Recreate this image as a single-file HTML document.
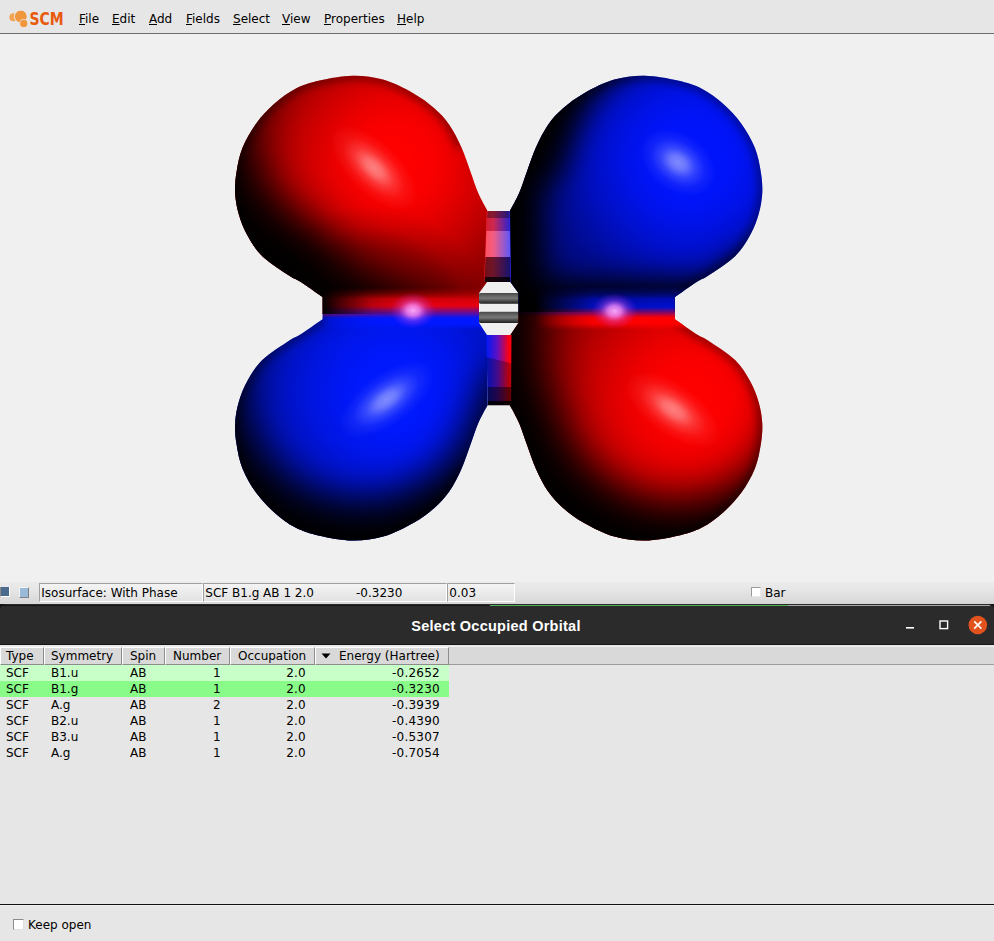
<!DOCTYPE html>
<html>
<head>
<meta charset="utf-8">
<title>Select Occupied Orbital</title>
<style>
html,body{margin:0;padding:0;}
body{width:994px;height:941px;position:relative;overflow:hidden;background:#e6e6e6;font-family:"DejaVu Sans","Liberation Sans",sans-serif;font-size:12px;color:#000;}
.abs{position:absolute;}
#menubar{left:0;top:0;width:994px;height:33px;background:#e6e6e6;border-bottom:1px solid #6f6f6f;box-sizing:content-box;}
#menubar span.mi{position:absolute;top:11px;font-size:12px;line-height:16px;white-space:nowrap;}
#menubar u{text-decoration:underline;text-underline-offset:1px;}
#logo{position:absolute;left:0;top:0;}
#view{left:0;top:34px;width:994px;height:548px;background:#f0f0f0;}
#status{left:0;top:582px;width:994px;height:22px;background:linear-gradient(#ebebeb,#e6e6e6 35%,#d6d6d6);}
.sfield{position:absolute;top:1px;height:19px;padding-top:1px;border:1px solid #a0a0a0;border-right-color:#fff;border-bottom-color:#fff;background:linear-gradient(#f4f4f4,#e2e2e2);font-size:12px;line-height:17px;white-space:nowrap;box-sizing:border-box;}
#titlebar{left:0;top:604px;width:994px;height:40px;border-bottom:1px solid #161616;background:#2b2b2b;border-radius:6px 6px 0 0;}
#title{position:absolute;left:0;width:992px;top:13px;text-align:center;color:#fff;font-weight:bold;font-size:14.5px;letter-spacing:0.25px;line-height:18px;font-family:"Liberation Sans","DejaVu Sans",sans-serif;}
#panel{left:0;top:645px;width:994px;height:296px;background:#e6e6e6;}
.hcell{position:absolute;top:2px;height:18px;box-sizing:border-box;border:1px solid #8c8c8c;border-top-color:#fff;border-left-color:#fff;background:#d9d9d9;font-size:12px;line-height:16px;white-space:nowrap;}
.row{position:absolute;left:0;width:449px;height:16px;font-size:12px;line-height:16px;}
.row span{position:absolute;top:0;white-space:nowrap;}
.r{text-align:right;letter-spacing:0.25px;}
</style>
</head>
<body>
<div id="menubar" class="abs">
<svg id="logo" width="70" height="34" viewBox="0 0 70 34">
<circle cx="13.4" cy="17.3" r="4" fill="#f3a452"/>
<circle cx="20.8" cy="16.5" r="6.4" fill="#f0963c" stroke="#ececec" stroke-width="1"/>
<circle cx="23.7" cy="23.5" r="4.1" fill="#f0963c" stroke="#ececec" stroke-width="0.8"/>
<text x="29.4" y="25.4" font-family="'DejaVu Sans','Liberation Sans',sans-serif" font-weight="bold" font-size="17.6" fill="#e8590c" textLength="34.2" lengthAdjust="spacingAndGlyphs">SCM</text>
</svg>
<span class="mi" style="left:79px"><u>F</u>ile</span>
<span class="mi" style="left:112px"><u>E</u>dit</span>
<span class="mi" style="left:149px"><u>A</u>dd</span>
<span class="mi" style="left:186px"><u>F</u>ields</span>
<span class="mi" style="left:233px"><u>S</u>elect</span>
<span class="mi" style="left:282px"><u>V</u>iew</span>
<span class="mi" style="left:324px"><u>P</u>roperties</span>
<span class="mi" style="left:397px"><u>H</u>elp</span>
</div>

<div id="view" class="abs">
<svg class="abs" style="left:0;top:0" width="994" height="548" viewBox="0 34 994 548">
<defs>
<path id="pl" d="M322.6 297.0C318.8 294.4 305.5 285.0 300.0 281.5C294.5 278.0 295.7 280.0 289.4 275.8C283.1 271.6 269.3 263.0 262.3 256.2C255.3 249.4 251.1 242.0 247.2 235.0C243.3 228.0 240.7 221.0 238.7 214.0C236.7 207.0 235.4 199.9 235.1 192.8C234.8 185.8 235.3 179.2 236.6 171.7C237.8 164.1 239.3 155.6 242.6 147.5C245.9 139.4 250.9 130.7 256.2 123.4C261.5 116.1 267.8 109.6 274.3 103.8C280.9 98.0 287.9 92.6 295.5 88.7C303.1 84.8 310.1 82.7 319.6 80.5C329.2 78.3 342.2 75.9 352.8 75.7C363.4 75.5 372.9 76.7 383.0 79.6C393.1 82.5 404.6 88.4 413.2 93.2C421.8 98.0 428.3 103.0 434.3 108.3C440.3 113.6 444.9 118.4 449.4 124.9C453.9 131.4 458.0 139.7 461.5 147.5C465.0 155.3 467.7 164.1 470.5 171.7C473.3 179.2 475.3 186.2 478.1 192.8C480.9 199.4 485.9 208.0 487.5 211.0L487.0 282.0L479.0 293.0L479.0 323.0L487.0 335.0L487.5 405.2C485.9 408.2 480.9 416.9 478.1 423.4C475.3 430.0 473.3 437.0 470.5 444.5C467.7 452.1 465.0 460.9 461.5 468.7C458.0 476.5 453.9 484.8 449.4 491.3C444.9 497.8 440.3 502.6 434.3 507.9C428.3 513.2 421.8 518.2 413.2 523.0C404.6 527.8 393.1 533.7 383.0 536.6C372.9 539.5 363.4 540.6 352.8 540.5C342.2 540.4 329.2 537.9 319.6 535.7C310.1 533.5 303.1 531.4 295.5 527.5C287.9 523.6 280.9 518.2 274.3 512.4C267.8 506.6 261.5 500.1 256.2 492.8C250.9 485.5 245.9 476.8 242.6 468.7C239.3 460.7 237.8 452.1 236.6 444.5C235.3 437.0 234.8 430.5 235.1 423.4C235.4 416.4 236.7 409.2 238.7 402.2C240.7 395.2 243.3 388.2 247.2 381.2C251.1 374.2 255.3 366.8 262.3 360.0C269.3 353.2 283.1 344.6 289.4 340.4C295.7 336.2 294.5 338.2 300.0 334.7C305.5 331.2 318.8 321.8 322.6 319.2Z"/>
<path id="pr" d="M674.8 297.0C678.6 294.4 691.9 285.0 697.4 281.5C702.9 278.0 701.7 280.0 708.0 275.8C714.3 271.6 728.1 263.0 735.1 256.2C742.1 249.4 746.3 242.0 750.2 235.0C754.1 228.0 756.7 221.0 758.7 214.0C760.7 207.0 761.9 199.9 762.3 192.8C762.6 185.8 762.0 179.2 760.8 171.7C759.5 164.1 758.1 155.6 754.8 147.5C751.5 139.4 746.5 130.7 741.2 123.4C735.9 116.1 729.6 109.6 723.1 103.8C716.5 98.0 709.4 92.6 701.9 88.7C694.4 84.8 687.3 82.7 677.8 80.5C668.2 78.3 655.2 75.9 644.6 75.7C634.0 75.5 624.5 76.7 614.4 79.6C604.3 82.5 592.8 88.4 584.2 93.2C575.7 98.0 569.1 103.0 563.1 108.3C557.1 113.6 552.5 118.4 548.0 124.9C543.5 131.4 539.4 139.7 535.9 147.5C532.4 155.3 529.7 164.1 526.9 171.7C524.1 179.2 522.1 186.2 519.3 192.8C516.5 199.4 511.5 208.0 509.9 211.0L510.4 282.0L518.4 293.0L518.4 323.0L510.4 335.0L509.9 405.2C511.5 408.2 516.5 416.9 519.3 423.4C522.1 430.0 524.1 437.0 526.9 444.5C529.7 452.1 532.4 460.9 535.9 468.7C539.4 476.5 543.5 484.8 548.0 491.3C552.5 497.8 557.1 502.6 563.1 507.9C569.1 513.2 575.7 518.2 584.2 523.0C592.8 527.8 604.3 533.7 614.4 536.6C624.5 539.5 634.0 540.6 644.6 540.5C655.2 540.4 668.2 537.9 677.8 535.7C687.3 533.5 694.4 531.4 701.9 527.5C709.4 523.6 716.5 518.2 723.1 512.4C729.6 506.6 735.9 500.1 741.2 492.8C746.5 485.5 751.5 476.8 754.8 468.7C758.1 460.7 759.5 452.1 760.8 444.5C762.0 437.0 762.6 430.5 762.3 423.4C761.9 416.4 760.7 409.2 758.7 402.2C756.7 395.2 754.1 388.2 750.2 381.2C746.3 374.2 742.1 366.8 735.1 360.0C728.1 353.2 714.3 344.6 708.0 340.4C701.7 336.2 702.9 338.2 697.4 334.7C691.9 331.2 678.6 321.8 674.8 319.2Z"/>
<path id="sl" d="M322.6 297.0C318.8 294.4 305.5 285.0 300.0 281.5C294.5 278.0 295.7 280.0 289.4 275.8C283.1 271.6 269.3 263.0 262.3 256.2C255.3 249.4 251.1 242.0 247.2 235.0C243.3 228.0 240.7 221.0 238.7 214.0C236.7 207.0 235.4 199.9 235.1 192.8C234.8 185.8 235.3 179.2 236.6 171.7C237.8 164.1 239.3 155.6 242.6 147.5C245.9 139.4 250.9 130.7 256.2 123.4C261.5 116.1 267.8 109.6 274.3 103.8C280.9 98.0 287.9 92.6 295.5 88.7C303.1 84.8 310.1 82.7 319.6 80.5C329.2 78.3 342.2 75.9 352.8 75.7C363.4 75.5 372.9 76.7 383.0 79.6C393.1 82.5 404.6 88.4 413.2 93.2C421.8 98.0 428.3 103.0 434.3 108.3C440.3 113.6 444.9 118.4 449.4 124.9C453.9 131.4 459.5 143.7 461.5 147.5 M322.6 319.2C318.8 321.8 305.5 331.2 300.0 334.7C294.5 338.2 295.7 336.2 289.4 340.4C283.1 344.6 269.3 353.2 262.3 360.0C255.3 366.8 251.1 374.2 247.2 381.2C243.3 388.2 240.7 395.2 238.7 402.2C236.7 409.2 235.4 416.4 235.1 423.4C234.8 430.5 235.3 437.0 236.6 444.5C237.8 452.1 239.3 460.7 242.6 468.7C245.9 476.8 250.9 485.5 256.2 492.8C261.5 500.1 267.8 506.6 274.3 512.4C280.9 518.2 287.9 523.6 295.5 527.5C303.1 531.4 310.1 533.5 319.6 535.7C329.2 537.9 342.2 540.4 352.8 540.5C363.4 540.6 372.9 539.5 383.0 536.6C393.1 533.7 404.6 527.8 413.2 523.0C421.8 518.2 428.3 513.2 434.3 507.9C440.3 502.6 444.9 497.8 449.4 491.3C453.9 484.8 459.5 472.5 461.5 468.7"/>
<path id="sr" d="M674.8 297.0C678.6 294.4 691.9 285.0 697.4 281.5C702.9 278.0 701.7 280.0 708.0 275.8C714.3 271.6 728.1 263.0 735.1 256.2C742.1 249.4 746.3 242.0 750.2 235.0C754.1 228.0 756.7 221.0 758.7 214.0C760.7 207.0 761.9 199.9 762.3 192.8C762.6 185.8 762.0 179.2 760.8 171.7C759.5 164.1 758.1 155.6 754.8 147.5C751.5 139.4 746.5 130.7 741.2 123.4C735.9 116.1 729.6 109.6 723.1 103.8C716.5 98.0 709.4 92.6 701.9 88.7C694.4 84.8 687.3 82.7 677.8 80.5C668.2 78.3 655.2 75.9 644.6 75.7C634.0 75.5 624.5 76.7 614.4 79.6C604.3 82.5 592.8 88.4 584.2 93.2C575.7 98.0 569.1 103.0 563.1 108.3C557.1 113.6 552.5 118.4 548.0 124.9C543.5 131.4 539.4 139.7 535.9 147.5C532.4 155.3 529.7 164.1 526.9 171.7C524.1 179.2 522.1 186.2 519.3 192.8C516.5 199.4 511.5 208.0 509.9 211.0 M674.8 319.2C678.6 321.8 691.9 331.2 697.4 334.7C702.9 338.2 701.7 336.2 708.0 340.4C714.3 344.6 728.1 353.2 735.1 360.0C742.1 366.8 746.3 374.2 750.2 381.2C754.1 388.2 756.7 395.2 758.7 402.2C760.7 409.2 761.9 416.4 762.3 423.4C762.6 430.5 762.0 437.0 760.8 444.5C759.5 452.1 758.1 460.7 754.8 468.7C751.5 476.8 746.5 485.5 741.2 492.8C735.9 500.1 729.6 506.6 723.1 512.4C716.5 518.2 709.4 523.6 701.9 527.5C694.4 531.4 687.3 533.5 677.8 535.7C668.2 537.9 655.2 540.4 644.6 540.5C634.0 540.6 624.5 539.5 614.4 536.6C604.3 533.7 592.8 527.8 584.2 523.0C575.7 518.2 569.1 513.2 563.1 507.9C557.1 502.6 552.5 497.8 548.0 491.3C543.5 484.8 539.4 476.5 535.9 468.7C532.4 460.9 529.7 452.1 526.9 444.5C524.1 437.0 522.1 430.0 519.3 423.4C516.5 416.9 511.5 408.2 509.9 405.2"/>
<clipPath id="cl"><use href="#pl"/></clipPath>
<clipPath id="cr"><use href="#pr"/></clipPath>
<filter id="blTL" filterUnits="userSpaceOnUse" x="150" y="0" width="700" height="620"><feGaussianBlur stdDeviation="22"/></filter>
<mask id="mTL" maskUnits="userSpaceOnUse" x="150" y="0" width="700" height="620"><rect x="150" y="0" width="700" height="620" fill="#fff"/><path d="M322.6 297.0C318.8 294.4 305.5 285.0 300.0 281.5C294.5 278.0 295.7 280.0 289.4 275.8C283.1 271.6 269.3 263.0 262.3 256.2C255.3 249.4 251.1 242.0 247.2 235.0C243.3 228.0 240.7 221.0 238.7 214.0C236.7 207.0 235.4 199.9 235.1 192.8C234.8 185.8 235.3 179.2 236.6 171.7C237.8 164.1 239.3 155.6 242.6 147.5C245.9 139.4 250.9 130.7 256.2 123.4C261.5 116.1 267.8 109.6 274.3 103.8C280.9 98.0 287.9 92.6 295.5 88.7C303.1 84.8 310.1 82.7 319.6 80.5C329.2 78.3 342.2 75.9 352.8 75.7C363.4 75.5 372.9 76.7 383.0 79.6C393.1 82.5 404.6 88.4 413.2 93.2C421.8 98.0 428.3 103.0 434.3 108.3C440.3 113.6 444.9 118.4 449.4 124.9C453.9 131.4 458.0 139.7 461.5 147.5C465.0 155.3 467.7 164.1 470.5 171.7C473.3 179.2 475.3 186.2 478.1 192.8C480.9 199.4 485.9 208.0 487.5 211.0L530.0 211.0L530.0 452.0L322.6 315.0Z" fill="#000" transform="translate(15,-56)" filter="url(#blTL)"/></mask>
<filter id="blBL" filterUnits="userSpaceOnUse" x="150" y="0" width="700" height="620"><feGaussianBlur stdDeviation="20"/></filter>
<mask id="mBL" maskUnits="userSpaceOnUse" x="150" y="0" width="700" height="620"><rect x="150" y="0" width="700" height="620" fill="#fff"/><path d="M322.6 319.2C318.8 321.8 305.5 331.2 300.0 334.7C294.5 338.2 295.7 336.2 289.4 340.4C283.1 344.6 269.3 353.2 262.3 360.0C255.3 366.8 251.1 374.2 247.2 381.2C243.3 388.2 240.7 395.2 238.7 402.2C236.7 409.2 235.4 416.4 235.1 423.4C234.8 430.5 235.3 437.0 236.6 444.5C237.8 452.1 239.3 460.7 242.6 468.7C245.9 476.8 250.9 485.5 256.2 492.8C261.5 500.1 267.8 506.6 274.3 512.4C280.9 518.2 287.9 523.6 295.5 527.5C303.1 531.4 310.1 533.5 319.6 535.7C329.2 537.9 342.2 540.4 352.8 540.5C363.4 540.6 372.9 539.5 383.0 536.6C393.1 533.7 404.6 527.8 413.2 523.0C421.8 518.2 428.3 513.2 434.3 507.9C440.3 502.6 444.9 497.8 449.4 491.3C453.9 484.8 458.0 476.5 461.5 468.7C465.0 460.9 467.7 452.1 470.5 444.5C473.3 437.0 475.3 430.0 478.1 423.4C480.9 416.9 485.9 408.2 487.5 405.2L530.0 405.0L530.0 150.0L180.0 150.0L180.0 319.2Z" fill="#000" transform="translate(8,-40)" filter="url(#blBL)"/></mask>
<filter id="blTR" filterUnits="userSpaceOnUse" x="150" y="0" width="700" height="620"><feGaussianBlur stdDeviation="15"/></filter>
<mask id="mTR" maskUnits="userSpaceOnUse" x="150" y="0" width="700" height="620"><rect x="150" y="0" width="700" height="620" fill="#fff"/><path d="M674.8 297.0C678.6 294.4 691.9 285.0 697.4 281.5C702.9 278.0 701.7 280.0 708.0 275.8C714.3 271.6 728.1 263.0 735.1 256.2C742.1 249.4 746.3 242.0 750.2 235.0C754.1 228.0 756.7 221.0 758.7 214.0C760.7 207.0 761.9 199.9 762.3 192.8C762.6 185.8 762.0 179.2 760.8 171.7C759.5 164.1 758.1 155.6 754.8 147.5C751.5 139.4 746.5 130.7 741.2 123.4C735.9 116.1 729.6 109.6 723.1 103.8C716.5 98.0 709.4 92.6 701.9 88.7C694.4 84.8 687.3 82.7 677.8 80.5C668.2 78.3 655.2 75.9 644.6 75.7C634.0 75.5 624.5 76.7 614.4 79.6C604.3 82.5 592.8 88.4 584.2 93.2C575.7 98.0 569.1 103.0 563.1 108.3C557.1 113.6 552.5 118.4 548.0 124.9C543.5 131.4 539.4 139.7 535.9 147.5C532.4 155.3 529.7 164.1 526.9 171.7C524.1 179.2 522.1 186.2 519.3 192.8C516.5 199.4 511.5 208.0 509.9 211.0L499.9 211.0L499.9 306.0L674.8 306.0Z" fill="#000" transform="translate(43,-25)" filter="url(#blTR)"/></mask>
<filter id="blBR" filterUnits="userSpaceOnUse" x="150" y="0" width="700" height="620"><feGaussianBlur stdDeviation="22"/></filter>
<mask id="mBR" maskUnits="userSpaceOnUse" x="150" y="0" width="700" height="620"><rect x="150" y="0" width="700" height="620" fill="#fff"/><path d="M674.8 319.2C678.6 321.8 691.9 331.2 697.4 334.7C702.9 338.2 701.7 336.2 708.0 340.4C714.3 344.6 728.1 353.2 735.1 360.0C742.1 366.8 746.3 374.2 750.2 381.2C754.1 388.2 756.7 395.2 758.7 402.2C760.7 409.2 761.9 416.4 762.3 423.4C762.6 430.5 762.0 437.0 760.8 444.5C759.5 452.1 758.1 460.7 754.8 468.7C751.5 476.8 746.5 485.5 741.2 492.8C735.9 500.1 729.6 506.6 723.1 512.4C716.5 518.2 709.4 523.6 701.9 527.5C694.4 531.4 687.3 533.5 677.8 535.7C668.2 537.9 655.2 540.4 644.6 540.5C634.0 540.6 624.5 539.5 614.4 536.6C604.3 533.7 592.8 527.8 584.2 523.0C575.7 518.2 569.1 513.2 563.1 507.9C557.1 502.6 552.5 497.8 548.0 491.3C543.5 484.8 539.4 476.5 535.9 468.7C532.4 460.9 529.7 452.1 526.9 444.5C524.1 437.0 522.1 430.0 519.3 423.4C516.5 416.9 511.5 408.2 509.9 405.2L512.0 405.0L512.0 150.0L850.0 150.0L850.0 319.2Z" fill="#000" transform="translate(30,-38)" filter="url(#blBR)"/></mask>
<radialGradient id="hw"><stop offset="0" stop-color="#fff" stop-opacity="0.5"/><stop offset="0.2" stop-color="#fff" stop-opacity="0.42"/><stop offset="0.45" stop-color="#fff" stop-opacity="0.2"/><stop offset="0.7" stop-color="#fff" stop-opacity="0.07"/><stop offset="1" stop-color="#fff" stop-opacity="0"/></radialGradient>
<radialGradient id="hn"><stop offset="0" stop-color="#ffb0ff" stop-opacity="0.95"/><stop offset="0.3" stop-color="#f888f8" stop-opacity="0.8"/><stop offset="0.6" stop-color="#d050e8" stop-opacity="0.35"/><stop offset="1" stop-color="#a020e0" stop-opacity="0"/></radialGradient>
<radialGradient id="fTL" gradientUnits="userSpaceOnUse" cx="395" cy="162" r="190"><stop offset="0" stop-color="#000" stop-opacity="0.000"/><stop offset="0.2" stop-color="#000" stop-opacity="0.020"/><stop offset="0.32" stop-color="#000" stop-opacity="0.080"/><stop offset="0.45" stop-color="#000" stop-opacity="0.180"/><stop offset="0.55" stop-color="#000" stop-opacity="0.270"/><stop offset="0.65" stop-color="#000" stop-opacity="0.370"/><stop offset="0.75" stop-color="#000" stop-opacity="0.450"/><stop offset="1" stop-color="#000" stop-opacity="0.580"/></radialGradient>
<radialGradient id="fBL" gradientUnits="userSpaceOnUse" cx="395" cy="392" r="190"><stop offset="0" stop-color="#000" stop-opacity="0.000"/><stop offset="0.2" stop-color="#000" stop-opacity="0.015"/><stop offset="0.32" stop-color="#000" stop-opacity="0.060"/><stop offset="0.45" stop-color="#000" stop-opacity="0.135"/><stop offset="0.55" stop-color="#000" stop-opacity="0.203"/><stop offset="0.65" stop-color="#000" stop-opacity="0.277"/><stop offset="0.75" stop-color="#000" stop-opacity="0.338"/><stop offset="1" stop-color="#000" stop-opacity="0.435"/></radialGradient>
<radialGradient id="fTR" gradientUnits="userSpaceOnUse" cx="690" cy="160" r="190"><stop offset="0" stop-color="#000" stop-opacity="0.000"/><stop offset="0.2" stop-color="#000" stop-opacity="0.020"/><stop offset="0.32" stop-color="#000" stop-opacity="0.080"/><stop offset="0.45" stop-color="#000" stop-opacity="0.180"/><stop offset="0.55" stop-color="#000" stop-opacity="0.270"/><stop offset="0.65" stop-color="#000" stop-opacity="0.370"/><stop offset="0.75" stop-color="#000" stop-opacity="0.450"/><stop offset="1" stop-color="#000" stop-opacity="0.580"/></radialGradient>
<radialGradient id="fBR" gradientUnits="userSpaceOnUse" cx="690" cy="400" r="190"><stop offset="0" stop-color="#000" stop-opacity="0.000"/><stop offset="0.2" stop-color="#000" stop-opacity="0.018"/><stop offset="0.32" stop-color="#000" stop-opacity="0.072"/><stop offset="0.45" stop-color="#000" stop-opacity="0.162"/><stop offset="0.55" stop-color="#000" stop-opacity="0.243"/><stop offset="0.65" stop-color="#000" stop-opacity="0.333"/><stop offset="0.75" stop-color="#000" stop-opacity="0.405"/><stop offset="1" stop-color="#000" stop-opacity="0.522"/></radialGradient>
<linearGradient id="bgl" gradientUnits="userSpaceOnUse" x1="0" y1="309" x2="0" y2="318"><stop offset="0" stop-color="#ff0000"/><stop offset="1" stop-color="#0018ff"/></linearGradient>
<linearGradient id="bgr" gradientUnits="userSpaceOnUse" x1="0" y1="307" x2="0" y2="317"><stop offset="0" stop-color="#0014ff"/><stop offset="1" stop-color="#ff0000"/></linearGradient>
<radialGradient id="xTL" gradientUnits="userSpaceOnUse" cx="370" cy="330" r="125"><stop offset="0" stop-color="#000" stop-opacity="0.5"/><stop offset="0.42" stop-color="#000" stop-opacity="0.45"/><stop offset="0.64" stop-color="#000" stop-opacity="0.33"/><stop offset="0.72" stop-color="#000" stop-opacity="0.25"/><stop offset="0.82" stop-color="#000" stop-opacity="0.12"/><stop offset="1" stop-color="#000" stop-opacity="0"/></radialGradient>
<linearGradient id="bar" x1="0" y1="0" x2="0" y2="1"><stop offset="0" stop-color="#484848"/><stop offset="0.3" stop-color="#686868"/><stop offset="0.5" stop-color="#767676"/><stop offset="0.75" stop-color="#4a4a4a"/><stop offset="1" stop-color="#1e1e1e"/></linearGradient>
<linearGradient id="st1" x1="0" y1="0" x2="1" y2="0"><stop offset="0" stop-color="#ff2030"/><stop offset="0.35" stop-color="#f03060"/><stop offset="1" stop-color="#2828ff"/></linearGradient>
<linearGradient id="st2" x1="0" y1="0" x2="1" y2="0"><stop offset="0" stop-color="#0018f8"/><stop offset="0.45" stop-color="#6010c0"/><stop offset="0.9" stop-color="#ff0010"/></linearGradient>
<linearGradient id="nl" gradientUnits="userSpaceOnUse" x1="0" y1="288" x2="0" y2="330"><stop offset="0" stop-color="#c00000" stop-opacity="0"/><stop offset="0.14" stop-color="#c00000" stop-opacity="0.5"/><stop offset="0.26" stop-color="#d00008" stop-opacity="1"/><stop offset="0.42" stop-color="#e80010"/><stop offset="0.72" stop-color="#0018ff"/><stop offset="0.85" stop-color="#0018ff" stop-opacity="1"/><stop offset="1" stop-color="#0018ff" stop-opacity="0"/></linearGradient>
<linearGradient id="nr" gradientUnits="userSpaceOnUse" x1="0" y1="286" x2="0" y2="330"><stop offset="0" stop-color="#000ca0" stop-opacity="0"/><stop offset="0.16" stop-color="#000ca0" stop-opacity="0.5"/><stop offset="0.3" stop-color="#000cb4" stop-opacity="1"/><stop offset="0.48" stop-color="#0010d0"/><stop offset="0.72" stop-color="#ff0000"/><stop offset="0.85" stop-color="#ff0000" stop-opacity="1"/><stop offset="1" stop-color="#ff0000" stop-opacity="0"/></linearGradient>
<linearGradient id="nlx" gradientUnits="userSpaceOnUse" x1="322" y1="0" x2="488" y2="0"><stop offset="0" stop-color="#fff" stop-opacity="0"/><stop offset="0.1" stop-color="#fff" stop-opacity="0.3"/><stop offset="0.3" stop-color="#fff" stop-opacity="0.8"/><stop offset="0.5" stop-color="#fff" stop-opacity="1"/><stop offset="1" stop-color="#fff" stop-opacity="1"/></linearGradient>
<linearGradient id="nrx" gradientUnits="userSpaceOnUse" x1="510" y1="0" x2="677" y2="0"><stop offset="0" stop-color="#fff" stop-opacity="0"/><stop offset="0.15" stop-color="#fff" stop-opacity="0"/><stop offset="0.5" stop-color="#fff" stop-opacity="0.9"/><stop offset="1" stop-color="#fff" stop-opacity="1"/></linearGradient>
<mask id="mnl" maskUnits="userSpaceOnUse" x="300" y="270" width="220" height="80"><rect x="300" y="270" width="220" height="80" fill="url(#nlx)"/></mask>
<mask id="mnr" maskUnits="userSpaceOnUse" x="490" y="270" width="220" height="80"><rect x="490" y="270" width="220" height="80" fill="url(#nrx)"/></mask>
<filter id="b5" filterUnits="userSpaceOnUse" x="150" y="0" width="700" height="620"><feGaussianBlur stdDeviation="4"/></filter>
<filter id="b2" filterUnits="userSpaceOnUse" x="150" y="0" width="700" height="620"><feGaussianBlur stdDeviation="2.5"/></filter>
</defs>
<rect x="478.7" y="293" width="40.8" height="10.8" rx="2" fill="url(#bar)"/>
<rect x="478.7" y="311.8" width="40.8" height="11.2" rx="2" fill="url(#bar)"/>
<g clip-path="url(#cl)">
<rect x="220" y="60" width="300" height="500" fill="url(#bgl)"/>
<rect x="220" y="60" width="300" height="248" fill="url(#fTL)"/>
<rect x="220" y="308" width="300" height="252" fill="url(#fBL)"/>
<rect x="220" y="60" width="300" height="254" fill="#000" mask="url(#mTL)"/>
<rect x="220" y="60" width="300" height="254" fill="url(#xTL)"/>
<rect x="220" y="314" width="300" height="246" fill="#000" mask="url(#mBL)"/>
<use href="#sl" fill="none" stroke="#000" stroke-opacity="0.4" stroke-width="8" filter="url(#b5)"/>
<rect x="300" y="288" width="220" height="44" fill="url(#nl)" mask="url(#mnl)"/>
<ellipse cx="0" cy="0" rx="55" ry="26" fill="url(#hw)" transform="translate(374,168) rotate(44)"/>
<ellipse cx="0" cy="0" rx="55" ry="26" fill="url(#hw)" transform="translate(386.5,399.5) rotate(-36)"/>
<ellipse cx="413" cy="310.5" rx="23" ry="18" fill="url(#hn)"/>
</g>
<g clip-path="url(#cr)">
<rect x="480" y="60" width="300" height="500" fill="url(#bgr)"/>
<rect x="480" y="60" width="300" height="248" fill="url(#fTR)"/>
<rect x="480" y="308" width="300" height="252" fill="url(#fBR)"/>
<rect x="480" y="60" width="300" height="252" fill="#000" mask="url(#mTR)"/>
<rect x="480" y="312" width="300" height="248" fill="#000" mask="url(#mBR)"/>
<use href="#sr" fill="none" stroke="#000" stroke-opacity="0.4" stroke-width="8" filter="url(#b5)"/>
<rect x="490" y="286" width="220" height="46" fill="url(#nr)" mask="url(#mnr)"/>
<ellipse cx="0" cy="0" rx="42" ry="29" fill="url(#hw)" transform="translate(678,162.5) rotate(35)"/>
<ellipse cx="0" cy="0" rx="55" ry="26" fill="url(#hw)" transform="translate(673,409.5) rotate(35)"/>
<ellipse cx="614.5" cy="311" rx="23" ry="18" fill="url(#hn)"/>
</g>
<path d="M486.8 211 L510 211 L511 282 L484.2 282 Z" fill="url(#st1)"/>
<path d="M487.5 211 L509.5 211 L509.6 218 L487 218Z" fill="#000" fill-opacity="0.45"/>
<path d="M487 218 L509.6 218 L509.8 231 L486.5 231Z" fill="#000" fill-opacity="0.15"/>
<path d="M486.5 231 L509.8 231 L510.2 257 L485.5 257Z" fill="#fff" fill-opacity="0.22"/>
<path d="M485.5 257 L510.2 257 L510.4 277 L484.8 277Z" fill="#000" fill-opacity="0.55"/>
<path d="M484.8 277 L510.4 277 L510.5 282 L484.5 282Z" fill="#000" fill-opacity="0.9"/>
<path d="M486.3 335 L511.5 335 L511 405 L487.8 405 Z" fill="url(#st2)"/>
<path d="M486.3 357 L511.5 363.5 L511 387 L487.5 387Z" fill="#000" fill-opacity="0.28"/>
<path d="M487.5 387 L511 387 L511 400.5 L487.8 400.5Z" fill="#000" fill-opacity="0.62"/>
<path d="M487.8 400.5 L511 400.5 L511 405.3 L487.8 405.3Z" fill="#000" fill-opacity="0.95"/>
</svg>
</div>

<div id="status" class="abs">
<div class="abs" style="left:0;top:5px;width:9px;height:9px;background:#4b6b8e;border-left:1px solid #8a8a8a;border-right:1px solid #fff;border-bottom:1px solid #fff;box-sizing:content-box;width:8px;"></div>
<div class="abs" style="left:19px;top:5px;width:8px;height:9px;background:#9bb9d9;border-left:1px solid #f4f4f4;border-top:1px solid #f4f4f4;border-right:1px solid #808080;border-bottom:1px solid #808080;box-sizing:content-box;"></div>
<div class="sfield" style="left:39px;width:164px;padding-left:1.3px;">Isosurface: With Phase</div>
<div class="sfield" style="left:203px;width:244px;padding-left:1.3px;">SCF B1.g AB 1 2.0<span style="position:absolute;left:152px;top:1px">-0.3230</span></div>
<div class="sfield" style="left:447px;width:68px;padding-left:1.3px;">0.03</div>
<div class="abs" style="left:751px;top:5px;width:10px;height:10px;background:#fff;border:1px solid #9a9a9a;border-right-color:#e8e8e8;border-bottom-color:#e8e8e8;box-sizing:border-box;"></div>
<div class="abs" style="left:765px;top:3px;font-size:12px;line-height:17px;">Bar</div>
</div>

<div class="abs" style="left:0;top:604px;width:994px;height:8px;background:#151515;"></div>
<div id="titlebar" class="abs">
<div id="title">Select Occupied Orbital</div>
<svg class="abs" style="left:890px;top:0" width="104" height="41" viewBox="0 0 104 41">
<rect x="16" y="23" width="8" height="1.6" fill="#fff"/>
<rect x="50" y="17" width="7.6" height="7.6" fill="none" stroke="#fff" stroke-width="1.4"/>
<circle cx="87.8" cy="21" r="9.3" fill="#e2521d"/>
<path d="M84.2 17.4 L91.4 24.6 M91.4 17.4 L84.2 24.6" stroke="#fff" stroke-width="1.6" fill="none"/>
</svg>
</div>

<div class="abs" style="left:0;top:605px;width:490px;height:1px;background:#151515;"></div>
<div class="abs" style="left:490px;top:605px;width:298px;height:1px;background:#4fb054;"></div>
<div class="abs" style="left:788px;top:605px;width:202px;height:1px;background:#a8a8a8;"></div>
<div id="panel" class="abs">
<div class="abs" style="left:0;top:1px;width:994px;height:19px;background:#d9d9d9;border-top:1px solid #ececec;border-bottom:1px solid #9c9c9c;box-sizing:border-box;"></div>
<div class="hcell" style="left:0;width:44px;padding-left:5px;">Type</div>
<div class="hcell" style="left:44px;width:78px;padding-left:6px;">Symmetry</div>
<div class="hcell" style="left:122px;width:43px;padding-left:7px;">Spin</div>
<div class="hcell" style="left:165px;width:65px;padding-left:7px;">Number</div>
<div class="hcell" style="left:230px;width:85px;padding-left:7px;">Occupation</div>
<div class="hcell" style="left:315px;width:134px;padding-left:23px;">Energy (Hartree)<svg class="abs" style="left:5px;top:5px" width="10" height="6"><path d="M0.5 0.5 L9.5 0.5 L5 5.5 Z" fill="#000"/></svg></div>

<div class="row" style="top:20px;background:#c8ffc8;"><span style="left:6px">SCF</span><span style="left:51px">B1.u</span><span style="left:130px">AB</span><span class="r" style="left:165px;width:56px">1</span><span class="r" style="left:230px;width:76px">2.0</span><span class="r" style="left:315px;width:125px">-0.2652</span></div>
<div class="row" style="top:36px;background:#88fb88;"><span style="left:6px">SCF</span><span style="left:51px">B1.g</span><span style="left:130px">AB</span><span class="r" style="left:165px;width:56px">1</span><span class="r" style="left:230px;width:76px">2.0</span><span class="r" style="left:315px;width:125px">-0.3230</span></div>
<div class="row" style="top:52px;"><span style="left:6px">SCF</span><span style="left:51px">A.g</span><span style="left:130px">AB</span><span class="r" style="left:165px;width:56px">2</span><span class="r" style="left:230px;width:76px">2.0</span><span class="r" style="left:315px;width:125px">-0.3939</span></div>
<div class="row" style="top:68px;"><span style="left:6px">SCF</span><span style="left:51px">B2.u</span><span style="left:130px">AB</span><span class="r" style="left:165px;width:56px">1</span><span class="r" style="left:230px;width:76px">2.0</span><span class="r" style="left:315px;width:125px">-0.4390</span></div>
<div class="row" style="top:84px;"><span style="left:6px">SCF</span><span style="left:51px">B3.u</span><span style="left:130px">AB</span><span class="r" style="left:165px;width:56px">1</span><span class="r" style="left:230px;width:76px">2.0</span><span class="r" style="left:315px;width:125px">-0.5307</span></div>
<div class="row" style="top:100px;"><span style="left:6px">SCF</span><span style="left:51px">A.g</span><span style="left:130px">AB</span><span class="r" style="left:165px;width:56px">1</span><span class="r" style="left:230px;width:76px">2.0</span><span class="r" style="left:315px;width:125px">-0.7054</span></div>

<div class="abs" style="left:0;top:258.5px;width:994px;height:1px;background:#111;"></div>
<div class="abs" style="left:0;top:259.5px;width:994px;height:1px;background:#f0f0f0;"></div>
<div class="abs" style="left:13px;top:274px;width:11px;height:11px;background:#fff;border:1px solid #8c8c8c;border-right-color:#e0e0e0;border-bottom-color:#e0e0e0;box-sizing:border-box;"></div>
<div class="abs" style="left:28px;top:272px;font-size:12px;line-height:17px;">Keep open</div>
</div>
</body>
</html>
